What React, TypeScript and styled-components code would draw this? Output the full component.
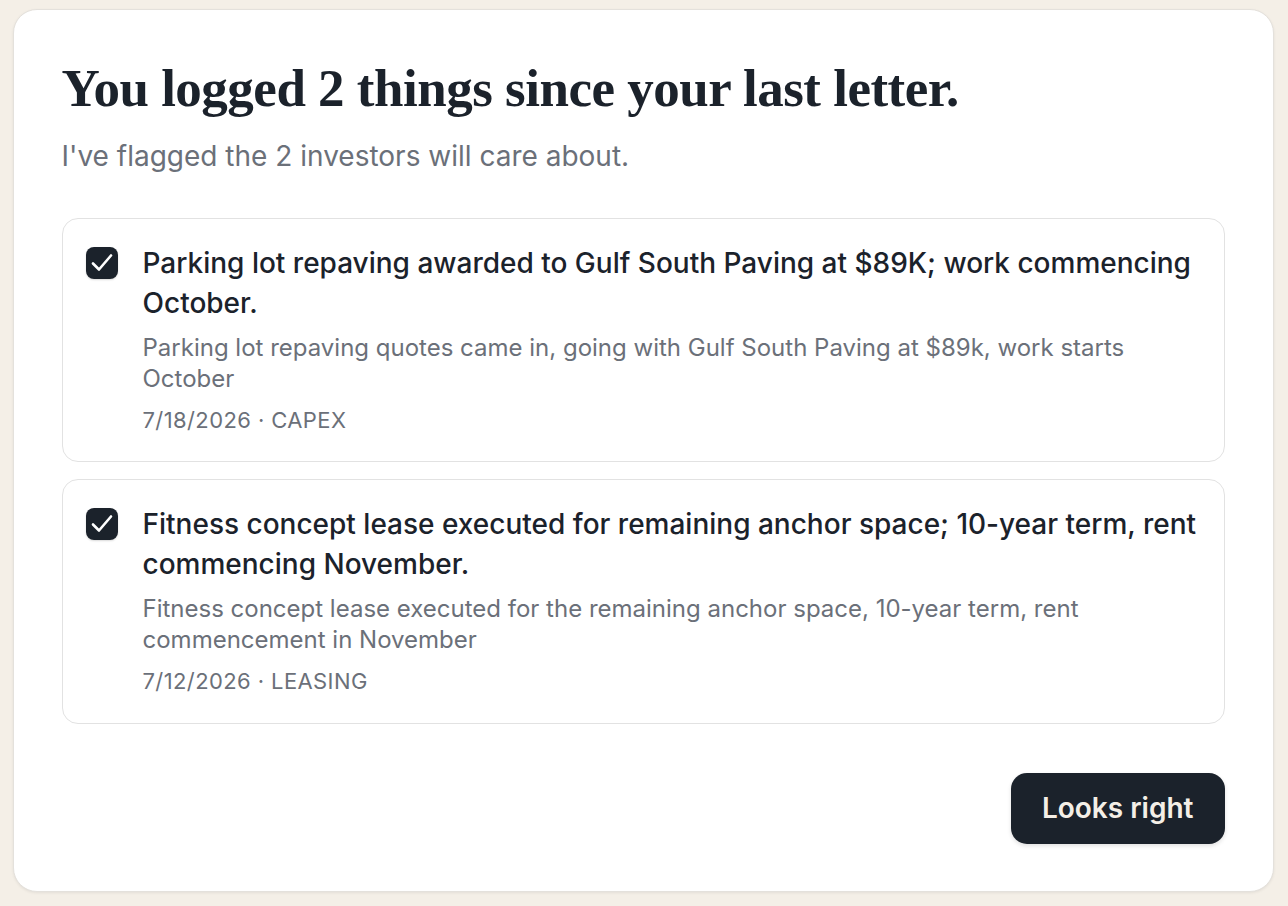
import React from "react";
import styled, { createGlobalStyle } from "styled-components";

const Global = createGlobalStyle`
  html, body { margin: 0; padding: 0; background: #f4efe7; }
  body { font-family: Inter, "Noto Sans", sans-serif; -webkit-font-smoothing: antialiased; }
  * { box-sizing: border-box; }
`;

const Page = styled.div`
  padding: 9px 14px 15px 13px;
  min-height: 906px;
`;

const Card = styled.section`
  background: #ffffff;
  border: 1.5px solid #e4e1dc;
  border-radius: 24px;
  box-shadow: 0 1px 3px rgba(0, 0, 0, 0.07);
  padding: 48px 48.5px 47.5px 47.5px;
  display: flex;
  flex-direction: column;
`;

const Heading = styled.h1`
  margin: 0;
  font-family: "Liberation Serif", "DejaVu Serif", serif;
  font-weight: 700;
  font-size: 53px;
  line-height: 60px;
  color: #1b222b;
  letter-spacing: -0.5px;
`;

const Subtitle = styled.p`
  margin: 19.5px 0 0;
  font-size: 28px;
  line-height: 36px;
  color: #6b7079;
`;

const List = styled.div`
  margin-top: 44px;
  display: flex;
  flex-direction: column;
  gap: 17px;
`;

const Item = styled.div`
  border: 1.5px solid #e2e2e2;
  border-radius: 16px;
  padding: 24px 20px 27.5px 23px;
  display: grid;
  grid-template-columns: 32px 1fr;
  column-gap: 25px;
`;

const CheckWrap = styled.div`
  height: 40px;
  display: flex;
  align-items: center;
`;

const Check = styled.span`
  width: 32px;
  height: 32px;
  border-radius: 8px;
  background: #1b222b;
  display: flex;
  align-items: center;
  justify-content: center;
  box-shadow: 0 1px 2px rgba(0, 0, 0, 0.15);
`;

const Body = styled.div`
  display: flex;
  flex-direction: column;
`;

const Title = styled.div`
  font-size: 28px;
  line-height: 40px;
  font-weight: 500;
  color: #1b222b;
`;

const Desc = styled.div`
  margin-top: 9px;
  font-size: 24px;
  line-height: 31px;
  color: #6b7079;
`;

const Meta = styled.div`
  margin-top: 12px;
  font-size: 22px;
  line-height: 28px;
  color: #6b7079;
  letter-spacing: 0.4px;
`;

const Footer = styled.div`
  margin-top: 49px;
  display: flex;
  justify-content: flex-end;
`;

const Button = styled.button`
  height: 71px;
  padding: 0 31px;
  border: none;
  border-radius: 16px;
  background: #1b222b;
  color: #f4efe7;
  font-family: Inter, "Noto Sans", sans-serif;
  font-size: 28px;
  font-weight: 600;
  box-shadow: 0 2px 4px rgba(0, 0, 0, 0.12);
  cursor: pointer;
`;

const items = [
  {
    title: "Parking lot repaving awarded to Gulf South Paving at $89K; work commencing October.",
    desc: "Parking lot repaving quotes came in, going with Gulf South Paving at $89k, work starts October",
    meta: "7/18/2026 · CAPEX",
  },
  {
    title: "Fitness concept lease executed for remaining anchor space; 10-year term, rent commencing November.",
    desc: "Fitness concept lease executed for the remaining anchor space, 10-year term, rent commencement in November",
    meta: "7/12/2026 · LEASING",
  },
];

const CheckIcon = () => (
  <svg width="32" height="32" viewBox="0 0 32 32" fill="none">
    <path d="M7 16.5l6 6L25 8.5" stroke="#ffffff" strokeWidth="2.6" strokeLinecap="round" strokeLinejoin="round" />
  </svg>
);

export default function App() {
  return (
    <>
      <Global />
      <Page>
        <Card>
          <Heading>You logged 2 things since your last letter.</Heading>
          <Subtitle>I've flagged the 2 investors will care about.</Subtitle>
          <List>
            {items.map((it) => (
              <Item key={it.meta}>
                <CheckWrap>
                  <Check>
                    <CheckIcon />
                  </Check>
                </CheckWrap>
                <Body>
                  <Title>{it.title}</Title>
                  <Desc>{it.desc}</Desc>
                  <Meta>{it.meta}</Meta>
                </Body>
              </Item>
            ))}
          </List>
          <Footer>
            <Button>Looks right</Button>
          </Footer>
        </Card>
      </Page>
    </>
  );
}
